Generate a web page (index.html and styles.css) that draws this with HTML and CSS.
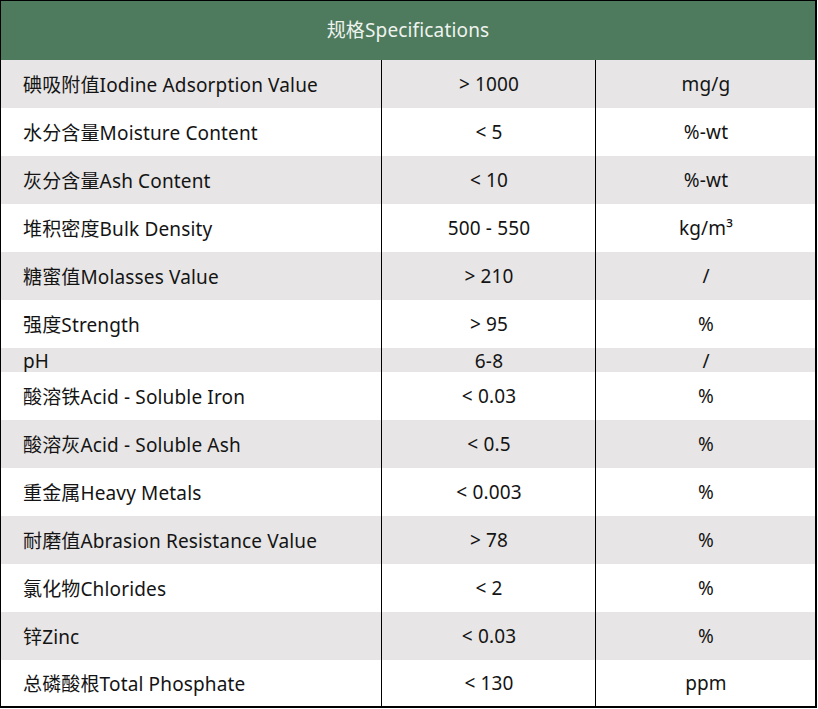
FILE: index.html
```html
<!DOCTYPE html>
<html lang="zh">
<head>
<meta charset="utf-8">
<link rel="stylesheet" href="styles.css">
</head>
<body>
<div class="sheet">
  <div class="head">规格Specifications</div>
  <div class="row gray"><div class="c1">碘吸附值Iodine Adsorption Value</div><div class="c2">&gt; 1000</div><div class="c3">mg/g</div></div>
  <div class="row"><div class="c1">水分含量Moisture Content</div><div class="c2">&lt; 5</div><div class="c3">%-wt</div></div>
  <div class="row gray"><div class="c1">灰分含量Ash Content</div><div class="c2">&lt; 10</div><div class="c3">%-wt</div></div>
  <div class="row"><div class="c1">堆积密度Bulk Density</div><div class="c2">500 - 550</div><div class="c3">kg/m³</div></div>
  <div class="row gray"><div class="c1">糖蜜值Molasses Value</div><div class="c2">&gt; 210</div><div class="c3">/</div></div>
  <div class="row"><div class="c1">强度Strength</div><div class="c2">&gt; 95</div><div class="c3">%</div></div>
  <div class="row gray short"><div class="c1">pH</div><div class="c2">6-8</div><div class="c3">/</div></div>
  <div class="row"><div class="c1">酸溶铁Acid - Soluble Iron</div><div class="c2">&lt; 0.03</div><div class="c3">%</div></div>
  <div class="row gray"><div class="c1">酸溶灰Acid - Soluble Ash</div><div class="c2">&lt; 0.5</div><div class="c3">%</div></div>
  <div class="row"><div class="c1">重金属Heavy Metals</div><div class="c2">&lt; 0.003</div><div class="c3">%</div></div>
  <div class="row gray"><div class="c1">耐磨值Abrasion Resistance Value</div><div class="c2">&gt; 78</div><div class="c3">%</div></div>
  <div class="row"><div class="c1">氯化物Chlorides</div><div class="c2">&lt; 2</div><div class="c3">%</div></div>
  <div class="row gray"><div class="c1">锌Zinc</div><div class="c2">&lt; 0.03</div><div class="c3">%</div></div>
  <div class="row last"><div class="c1">总磷酸根Total Phosphate</div><div class="c2">&lt; 130</div><div class="c3">ppm</div></div>
</div>
</body>
</html>
```
FILE: styles.css
```css
html, body {
  margin: 0;
  padding: 0;
  background: #ffffff;
}
body {
  font-family: "Noto Sans", "Noto Sans CJK SC", sans-serif;
  font-size: 19px;
  letter-spacing: 0.15px;
  color: #141414;
}
.sheet {
  width: 814px;
  border-top: 1px solid #000;
  border-left: 1px solid #000;
  border-right: 2px solid #000;
  border-bottom: 2px solid #000;
  display: flex;
  flex-direction: column;
}
.head {
  height: 59px;
  box-sizing: border-box;
  padding-bottom: 3px;
  background: #4e7a5d;
  color: #eef3ee;
  display: flex;
  align-items: center;
  justify-content: center;
}
.row {
  display: grid;
  grid-template-columns: 380px 214px 220px;
  height: 48px;
  background: #ffffff;
}
.row.gray { background: #e7e5e5; }
.row.short { height: 24px; }
.row.last { height: 46px; }
.row > div {
  display: flex;
  align-items: center;
  padding-bottom: 1px;
}
.c1 {
  padding-left: 22px;
}
.c2, .c3 {
  border-left: 1px solid #000;
  justify-content: center;
}
.c2 { padding-left: 1px; }
.c3 { padding-left: 1px; }
```
